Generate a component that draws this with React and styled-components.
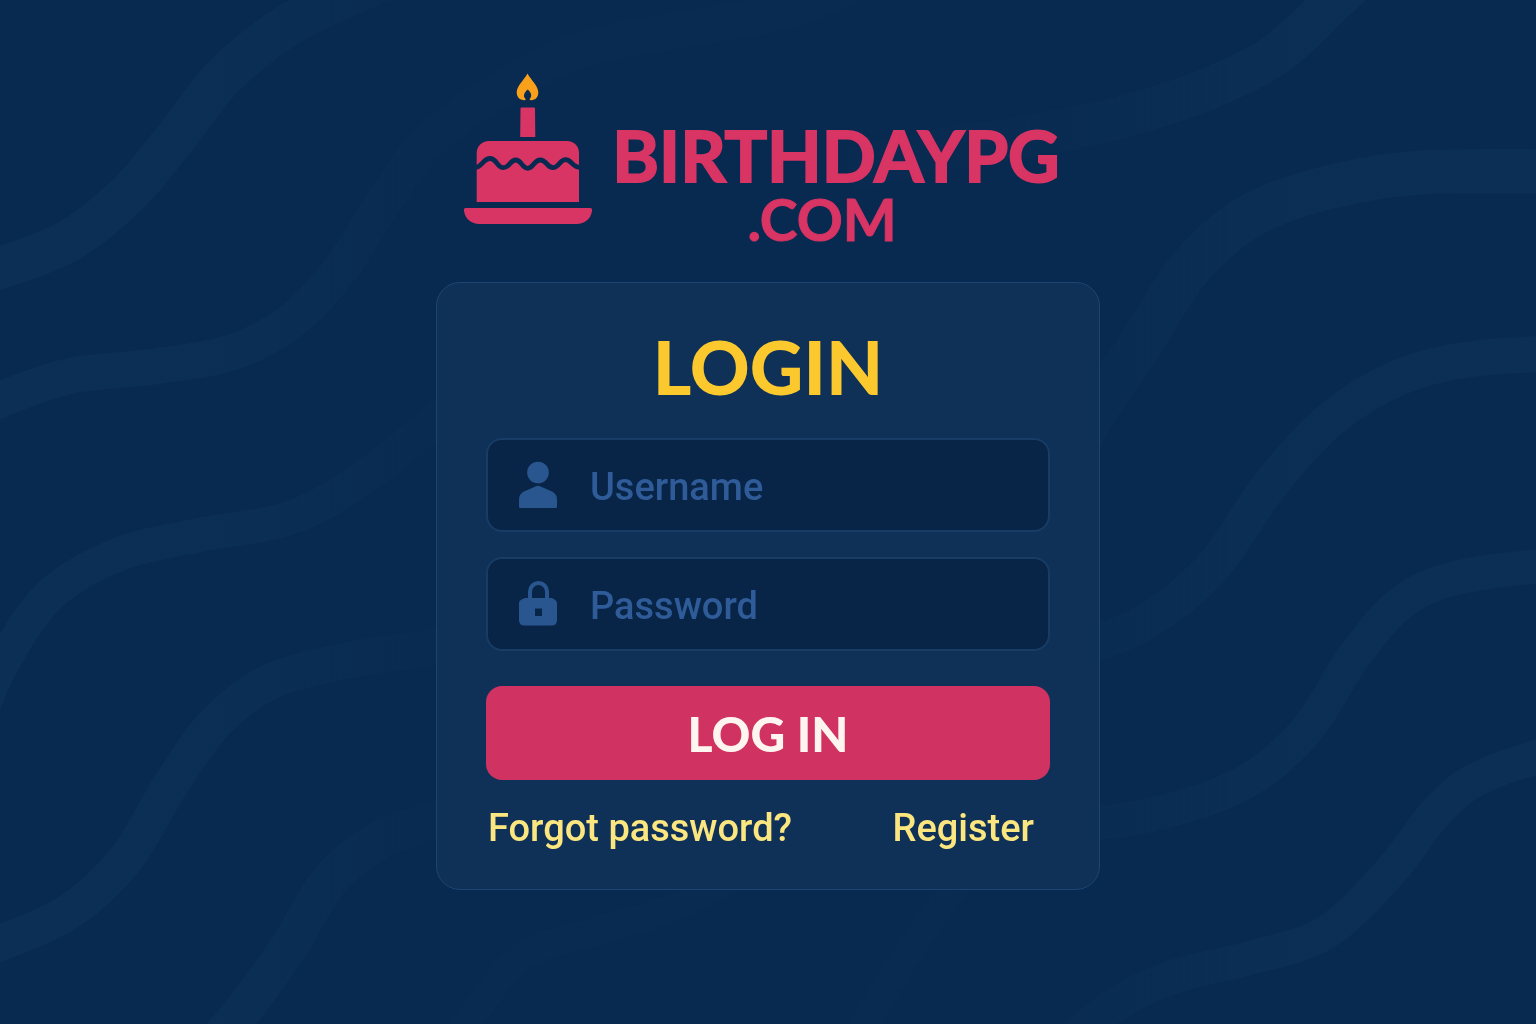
import React from 'react'
import styled, { createGlobalStyle } from 'styled-components'

// centre lines of the background ribbons
const waves = [
  { width: 42, points: [[-60, 285], [0, 268], [70, 240], [130, 192], [180, 132], [225, 75], [290, 24], [370, -14], [440, -40]] },
  { width: 36, points: [[-60, 430], [0, 400], [70, 376], [150, 367], [230, 353], [290, 322], [340, 270], [385, 200], [430, 140], [500, 90], [580, 50], [680, 30], [790, 10], [880, -30]] },
  { width: 34, points: [[-30, 740], [0, 668], [50, 595], [120, 554], [200, 535], [290, 518], [360, 480], [430, 425], [500, 360]] },
  { width: 36, points: [[-60, 958], [0, 943], [70, 911], [125, 860], [170, 786], [215, 723], [270, 682], [350, 660], [450, 645]] },
  { width: 38, points: [[190, 1070], [240, 1014], [290, 945], [330, 880], [380, 840], [450, 815]] },
  { width: 28, points: [[440, 1060], [480, 1005], [525, 955], [600, 930], [680, 905], [760, 860]] },
  { width: 28, points: [[830, 1070], [873, 1010], [910, 950], [960, 880], [1010, 820]] },
  { width: 42, points: [[850, 170], [940, 150], [1020, 138], [1110, 120], [1200, 92], [1275, 55], [1335, 0], [1390, -50]] },
  { width: 44, points: [[1050, 500], [1090, 420], [1140, 345], [1190, 268], [1250, 216], [1330, 187], [1430, 172], [1600, 172]] },
  { width: 36, points: [[1060, 655], [1140, 625], [1210, 570], [1270, 485], [1330, 420], [1400, 377], [1480, 358], [1600, 352]] },
  { width: 34, points: [[1060, 828], [1150, 815], [1240, 785], [1305, 732], [1355, 655], [1405, 600], [1470, 575], [1600, 560]] },
  { width: 34, points: [[1050, 1060], [1110, 1008], [1170, 978], [1250, 958], [1325, 933], [1390, 872], [1440, 808], [1490, 773], [1600, 738]] },
]

// smooth curve through every point
const toPath = points => {
  let d = `M${points[0]}`
  for (let i = 0; i < points.length - 1; i++) {
    const a = points[i - 1] || points[i]
    const b = points[i]
    const c = points[i + 1]
    const e = points[i + 2] || c
    d += `C${b[0] + (c[0] - a[0]) / 6},${b[1] + (c[1] - a[1]) / 6} ${c[0] - (e[0] - b[0]) / 6},${c[1] - (e[1] - b[1]) / 6} ${c}`
  }
  return d
}

const Waves = () => (
  <Backdrop viewBox="0 0 1536 1024" preserveAspectRatio="xMidYMid slice" aria-hidden="true">
    <defs>
      {/* ribbons fade out towards the middle of the page */}
      <linearGradient id="ribbon" gradientUnits="userSpaceOnUse" x1="0" y1="0" x2="1536" y2="0">
        <stop offset="0" stopColor="#0b2f55" />
        <stop offset="0.18" stopColor="#0b2e54" />
        <stop offset="0.28" stopColor="#0b2e54" stopOpacity="0.3" />
        <stop offset="0.6" stopColor="#0b2e54" stopOpacity="0.3" />
        <stop offset="0.7" stopColor="#0b2e54" stopOpacity="0.5" />
        <stop offset="0.8" stopColor="#0b2e54" />
        <stop offset="1" stopColor="#0b2f55" />
      </linearGradient>
    </defs>
    {waves.map(wave => (
      <path key={wave.points[0]} d={toPath(wave.points)} stroke="url(#ribbon)" strokeWidth={wave.width} />
    ))}
  </Backdrop>
)

const CakeIcon = () => (
  <Cake viewBox="0 0 128 152" aria-hidden="true">
    <path
      fill="#f9a11b"
      d="M63.500 0.500C60 7 52.700 13 52.700 19.500C52.700 24 55.500 27 60.500 27.300C61.800 27.300 62 26.500 61 25.300C58.800 22.500 60.500 19.300 63.700 16.500C67 19.300 68.300 22.500 66.200 25.300C65.300 26.500 65.500 27.300 67 27.300C71.700 27 74.300 24 74.300 19.500C74.300 13 67 7 63.500 0.500Z"
    />
    <path d="M57.500 34.500H70Q71 34.500 71 35.500L71.300 64H56.200L56.500 35.500Q56.500 34.500 57.500 34.500Z" />
    <path d="M12.700 129V80C12.700 73 18 68 25 68H103C110 68 115 73 115 80V129Z" />
    <path
      fill="none"
      stroke="#092a50"
      strokeWidth="4.800"
      d="M11 94.500C18 94.500 19 85.500 26 85.500S33 94.700 39.300 94.700S46 87 51.700 87S58 95.300 63.700 95.300S70 87 76.300 87S83 94.700 89 94.700S95.500 86.700 101.700 86.700S108 94.500 117 94.500"
    />
    <path d="M2 135H126Q128.500 135 128 138C127 146 120 151 113 151H15C8 151 1 146 0 138Q-0.500 135 2 135Z" />
  </Cake>
)

const UserIcon = () => (
  <FieldIcon viewBox="0 0 40 48" aria-hidden="true">
    <circle cx="20" cy="11.500" r="10.800" />
    <path d="M18 25.200Q20 24.400 22 25.200L34 30.500Q39 33 39 38.500V45.500Q39 47 37.500 47H2.500Q1 47 1 45.500V38.500Q1 33 6 30.500Z" />
  </FieldIcon>
)

const LockIcon = () => (
  <FieldIcon viewBox="0 0 40 48" aria-hidden="true">
    <path fill="none" stroke="currentColor" strokeWidth="4" d="M12 21V11.500A8.500 8.500 0 0 1 29 11.500V21" />
    <path
      fillRule="evenodd"
      d="M7 18H34L36.500 19.500Q39 20.500 39 23V40Q39 45.500 33.500 45.500H6.500Q1 45.500 1 40V23Q1 20.500 3.500 19.500ZM17 28.500V36H24V28.500Z"
    />
  </FieldIcon>
)

const Field = ({ icon, ...input }) => (
  <FieldBox>
    {icon}
    <FieldInput aria-label={input.placeholder} {...input} />
  </FieldBox>
)

export default function App() {
  return (
    <>
      <GlobalStyle />
      <Waves />
      <Page>
        <Brand>
          <CakeIcon />
          <BrandName>
            <span>BIRTHDAYPG</span>
            <BrandSuffix>.COM</BrandSuffix>
          </BrandName>
        </Brand>
        <Card onSubmit={e => e.preventDefault()}>
          <Title>LOGIN</Title>
          <Fields>
            <Field icon={<UserIcon />} type="text" name="username" placeholder="Username" />
            <Field icon={<LockIcon />} type="password" name="password" placeholder="Password" />
          </Fields>
          <SubmitButton type="submit">LOG IN</SubmitButton>
          <Links>
            <TextLink href="#forgot">Forgot password?</TextLink>
            <TextLink href="#register">Register</TextLink>
          </Links>
        </Card>
      </Page>
    </>
  )
}

const GlobalStyle = createGlobalStyle`
  * {
    box-sizing: border-box;
  }

  body {
    margin: 0;
    background: #092a50;
    font-family: Roboto, "Liberation Sans", sans-serif;
  }
`

const Backdrop = styled.svg`
  position: fixed;
  inset: 0;
  z-index: -1;
  width: 100%;
  height: 100%;
  fill: none;
`

const Page = styled.main`
  display: flex;
  flex-direction: column;
  align-items: center;
  min-height: 100vh;
  padding: 73px 24px;
`

const Brand = styled.header`
  display: flex;
  align-items: flex-start;
  gap: 20px;
  padding-right: 12px;
  color: #d83464;
`

const Cake = styled.svg`
  flex: none;
  width: 128px;
  height: 152px;
  fill: currentColor;
`

const BrandName = styled.div`
  display: flex;
  flex-direction: column;
  align-items: center;
  padding-top: 42px;
  font-family: Lato, "Open Sans", sans-serif;
  font-size: 71px;
  font-weight: 700;
  line-height: 80px;
  -webkit-text-stroke: 2px currentColor;
`

const BrandSuffix = styled.span`
  padding-right: 28px;
  font-size: 57px;
  line-height: 48px;
  -webkit-text-stroke-width: 1px;
`

const Card = styled.form`
  display: flex;
  flex-direction: column;
  width: 100%;
  max-width: 664px;
  margin-top: 39px;
  padding: 44px 49px 37px;
  border: 1px solid #1c4672;
  border-radius: 24px;
  background: #0f3158;
`

const Title = styled.h1`
  margin: 0;
  color: #fbc92e;
  font-family: Lato, "Open Sans", sans-serif;
  font-size: 74px;
  font-weight: 900;
  line-height: 80px;
  text-align: center;
`

const Fields = styled.div`
  display: flex;
  flex-direction: column;
  gap: 25px;
  margin-top: 31px;
`

const FieldBox = styled.label`
  display: flex;
  align-items: center;
  gap: 32px;
  height: 94px;
  padding: 0 30px;
  border: 2px solid #173c66;
  border-radius: 16px;
  background: #082548;
  color: #2a5690;
`

const FieldIcon = styled.svg`
  flex: none;
  width: 40px;
  height: 48px;
  fill: currentColor;
`

const FieldInput = styled.input`
  flex: 1;
  min-width: 0;
  height: 100%;
  padding: 4px 0 0;
  border: 0;
  outline: 0;
  background: transparent;
  color: #dbe7f5;
  font: inherit;
  font-size: 38px;
  font-weight: 500;

  &::placeholder {
    color: #2f5c99;
    opacity: 1;
  }
`

const SubmitButton = styled.button`
  height: 94px;
  margin-top: 35px;
  border: 0;
  border-radius: 16px;
  background: #d03262;
  color: #fff5f0;
  font-family: Lato, "Open Sans", sans-serif;
  font-size: 48px;
  font-weight: 900;
  cursor: pointer;
`

const Links = styled.nav`
  display: flex;
  justify-content: space-between;
  margin-top: 24px;
  padding: 0 16px 0 2px;
`

const TextLink = styled.a`
  color: #fbe680;
  font-size: 38px;
  font-weight: 500;
  line-height: 48px;
  text-decoration: none;
`
